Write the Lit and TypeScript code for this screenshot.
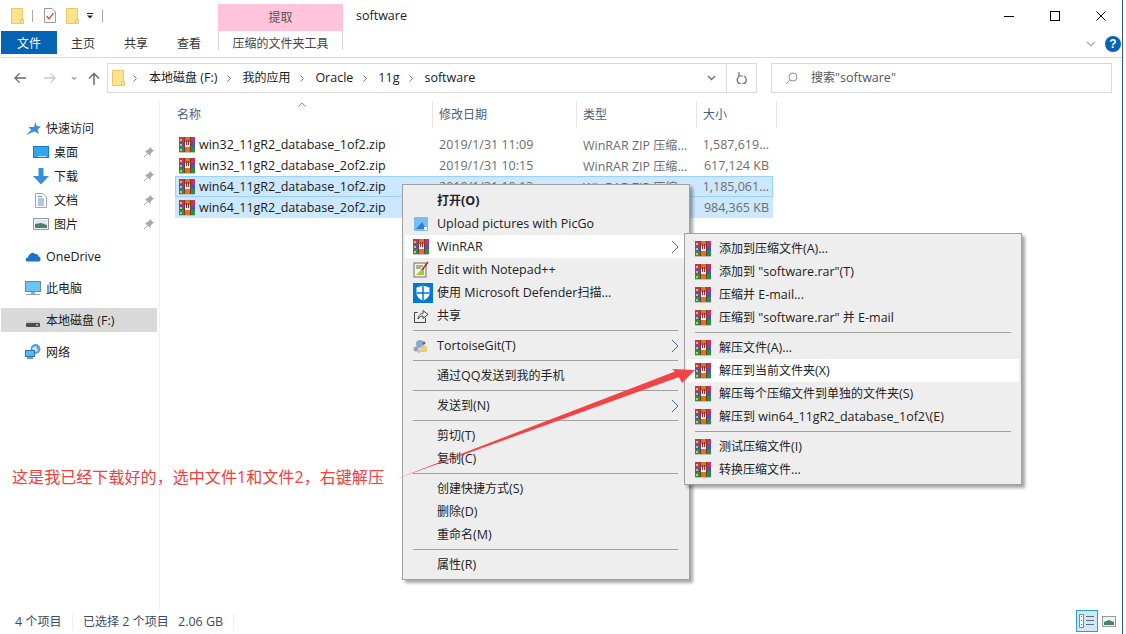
import { LitElement, html, css, svg } from "lit";
import { customElement } from "lit/decorators.js";

const CJK = /[\u3000-\u9fff\uff00-\uffef]/;

const tx = (s: string) =>
  s
    .split(/([\u3000-\u9fff\uff00-\uffef]+)/)
    .filter((p) => p)
    .map((p) => (CJK.test(p) ? p : html`<span class="lat">${p}</span>`));

const folder = () => html`<svg width="13" height="16" viewBox="0 0 13 16">
  <path d="M.5 .5H11.500V15.500H.5Z" fill="#fde38e" stroke="#e9c965"/><path d="M9.500 11.500H12.500V15.500H9.500Z" fill="#fde38e" stroke="#e9c965"/></svg>`;

const rar = () => html`<svg width="16" height="16" viewBox="0 0 16 16" shape-rendering="crispEdges">
  <rect x="0" y="0" width="16" height="5" fill="#cc2f62"/>
  <rect x="0" y="5" width="16" height="5" fill="#5252b8"/>
  <rect x="0" y="10" width="16" height="5" fill="#229244"/>
  <rect x="0" y="15" width="16" height="1" fill="#c0c0c0"/>
  <rect x="5" y="0" width="1" height="15" fill="#6a4030"/>
  <rect x="11" y="0" width="1" height="15" fill="#6a4030"/>
  <rect x="6" y="0" width="5" height="15" fill="#dc7424"/>
  <rect x="6" y="5" width="5" height="5" fill="#f6f2ea"/>
  <rect x="7" y="3" width="1" height="5" fill="#b02020"/><rect x="9" y="3" width="1" height="5" fill="#b02020"/>
  <rect x="1" y="2" width="2" height="2" fill="#e8c040"/><rect x="1" y="7" width="2" height="2" fill="#e8c040"/><rect x="1" y="12" width="2" height="2" fill="#e8c040"/>
</svg>`;

const pin = () => html`<svg class="pin" width="12" height="12" viewBox="0 0 12 12">
  <path d="M7 1L11 5L9.500 5.500L7.500 8L7.500 9.500L6.500 9.500L2.500 5.500L2.500 4.500L4 4.500L6.500 2.500Z" fill="#a8a8a8"/><path d="M4.500 7.500L1 11" stroke="#a8a8a8"/></svg>`;

const sub = () => html`<svg class="chev" width="8" height="14" viewBox="0 0 8 14"><path d="M1 1L7 7L1 13" fill="none" stroke="#4a6a9a"/></svg>`;

const navIcons: Record<string, unknown> = {
  star: html`<svg width="15" height="13" viewBox="0 0 15 13"><path d="M9.500 0L10.700 4L15 4.600L11.700 7.400L12.800 12L8.500 9.500L0 13L5.200 8L2.500 5H8Z" fill="#3f8fdc"/></svg>`,
  desktop: html`<svg width="16" height="14" viewBox="0 0 16 14"><rect x=".5" y="1.500" width="15" height="11" fill="#33a5ee" stroke="#1878c8"/><rect x="5" y="11" width="8" height="1" fill="#bfe3fb"/></svg>`,
  down: html`<svg width="16" height="17" viewBox="0 0 16 17"><path d="M5.500 0H10.500V8H16L8 16.500L0 8H5.500Z" fill="#3a8edb"/></svg>`,
  doc: html`<svg width="12" height="15" viewBox="0 0 12 15"><path d="M.5 .5H8L11.500 4V14.500H.5Z" fill="#fff" stroke="#a8a8a8"/><path d="M3 3.500H7M3 6H9M3 8H9M3 10H9M3 12H9" stroke="#5a94c8"/></svg>`,
  pic: html`<svg width="16" height="12" viewBox="0 0 16 12"><rect x=".5" y=".5" width="15" height="11" fill="#f2f2f2" stroke="#9a9a9a"/><rect x="2" y="2" width="12" height="4" fill="#dfe8f0"/><path d="M2 6L8 5L14 7V10H2Z" fill="#4c7f73"/></svg>`,
  cloud: html`<svg width="16" height="11" viewBox="0 0 16 11"><path d="M2.500 10.500C0 10.500 0 6.500 3 6.500C3.500 3 8 0 10 3C13 2.500 13.500 5 13.500 5.500C16 5.500 16.500 10.500 13.500 10.500Z" fill="#1a73c8"/></svg>`,
  pc: html`<svg width="16" height="15" viewBox="0 0 16 15"><rect x=".5" y=".5" width="15" height="10" fill="#6cc4f4" stroke="#6a8aa0"/><rect x="6" y="11" width="4" height="2" fill="#9ab"/><rect x="1" y="13" width="14" height="1" fill="#8aa0b0"/></svg>`,
  drive: html`<svg width="14" height="14" viewBox="0 0 14 14"><rect y="8" width="14" height="2" fill="#c8c8c8"/><rect y="10" width="14" height="4" rx="1" fill="#4d4d4d"/><rect x="10" y="11" width="2" height="2" fill="#5ddc5d"/></svg>`,
  net: html`<svg width="16" height="16" viewBox="0 0 16 16"><circle cx="10.500" cy="5" r="5" fill="#5aa0dc"/><path d="M7 4L11 2L13 7L9 8Z" fill="#cfe6f6"/><rect x=".5" y="6.500" width="9" height="6" fill="#58b8f0" stroke="#2c78b0"/><rect x="2" y="13" width="6" height="2" fill="#7a98b0"/></svg>`,
};

const navRows = [
  { t: "快速访问", i: "star", cls: "head" },
  { t: "桌面", i: "desktop", p: 1 },
  { t: "下载", i: "down", p: 1 },
  { t: "文档", i: "doc", p: 1 },
  { t: "图片", i: "pic", p: 1 },
  { t: "OneDrive", i: "cloud", cls: "head gap" },
  { t: "此电脑", i: "pc", cls: "head gap" },
  { t: "本地磁盘 (F:)", i: "drive", cls: "head gap sel" },
  { t: "网络", i: "net", cls: "head gap" },
];

const files = [
  ["win32_11gR2_database_1of2.zip", "2019/1/31 11:09", "WinRAR ZIP 压缩...", "1,587,619...", ""],
  ["win32_11gR2_database_2of2.zip", "2019/1/31 10:15", "WinRAR ZIP 压缩...", "617,124 KB", ""],
  ["win64_11gR2_database_1of2.zip", "2019/1/31 10:13", "WinRAR ZIP 压缩...", "1,185,061...", "sel focus"],
  ["win64_11gR2_database_2of2.zip", "2019/1/31 10:18", "WinRAR ZIP 压缩...", "984,365 KB", "sel"],
];

type M = { t?: string; i?: unknown; b?: boolean; hot?: boolean; arrow?: boolean; sep?: boolean };

const picgo = html`<svg width="16" height="16" viewBox="0 0 16 16"><rect x="1" y="1" width="14" height="14" rx="1" fill="#7cbcf0"/><path d="M3 13L9 6L13 13Z" fill="#2a7ed8"/><rect x="11" y="11" width="3" height="3" fill="#fff"/></svg>`;
const npp = html`<svg width="16" height="17" viewBox="0 0 16 17"><rect x="1" y="2" width="12" height="14" fill="#f4f4d8" stroke="#707070"/><path d="M3 14L11 6V14Z" fill="#9ccc40"/><path d="M3 5H10M3 7H8" stroke="#666"/><path d="M9 9L15 1" stroke="#a03030" stroke-width="1.500"/></svg>`;
const defender = html`<svg class="wide" width="20" height="20" viewBox="0 0 20 20"><rect width="20" height="20" fill="#0078d4"/><path d="M10 2.500L16.500 4.500V10C16.500 14 13 16.500 10 17.500C7 16.500 3.500 14 3.500 10V4.500Z" fill="#fff"/><path d="M10 2.500V17.500M3.500 10H16.500" stroke="#0078d4" stroke-width="1.500"/></svg>`;
const share = html`<svg width="16" height="16" viewBox="0 0 16 16" fill="none" stroke="#404040"><path d="M4.500 4.500H1.500V14.500H12.500V10"/><path d="M5 11C5.500 7 8 5.500 10 5.500V2.500L15 6.500L10 10.500V8C8 8 6 9 5 11Z"/></svg>`;
const tgit = html`<svg width="16" height="16" viewBox="0 0 16 16"><circle cx="7" cy="6" r="4" fill="#8aa8d0"/><circle cx="3" cy="11" r="2.500" fill="#a0a0a8"/><rect x="8" y="8" width="6" height="6" fill="#e8d070"/><circle cx="11" cy="5" r="1.500" fill="#6a6a70"/><circle cx="6" cy="13" r="2" fill="#c0c0c8"/></svg>`;

const menu1: M[] = [
  { t: "打开(O)", b: true },
  { t: "Upload pictures with PicGo", i: picgo },
  { t: "WinRAR", i: rar(), hot: true, arrow: true },
  { t: "Edit with Notepad++", i: npp },
  { t: "使用 Microsoft Defender扫描...", i: defender },
  { t: "共享", i: share },
  { sep: true },
  { t: "TortoiseGit(T)", i: tgit, arrow: true },
  { sep: true },
  { t: "通过QQ发送到我的手机" },
  { sep: true },
  { t: "发送到(N)", arrow: true },
  { sep: true },
  { t: "剪切(T)" },
  { t: "复制(C)" },
  { sep: true },
  { t: "创建快捷方式(S)" },
  { t: "删除(D)" },
  { t: "重命名(M)" },
  { sep: true },
  { t: "属性(R)" },
];

const menu2: M[] = [
  { t: "添加到压缩文件(A)...", i: rar() },
  { t: '添加到 "software.rar"(T)', i: rar() },
  { t: "压缩并 E-mail...", i: rar() },
  { t: '压缩到 "software.rar" 并 E-mail', i: rar() },
  { sep: true },
  { t: "解压文件(A)...", i: rar() },
  { t: "解压到当前文件夹(X)", i: rar(), hot: true },
  { t: "解压每个压缩文件到单独的文件夹(S)", i: rar() },
  { t: "解压到 win64_11gR2_database_1of2\\(E)", i: rar() },
  { sep: true },
  { t: "测试压缩文件(I)", i: rar() },
  { t: "转换压缩文件...", i: rar() },
];

const renderMenu = (items: M[]) =>
  items.map((m) =>
    m.sep
      ? html`<div class="msep"></div>`
      : html`<div class="mi ${m.hot ? "hot" : ""}">
          <span class="mic">${m.i ?? ""}</span>
          <span class="mt ${m.b ? "bold" : ""} ${CJK.test(m.t ?? "") ? "cjk" : ""}">${tx(m.t ?? "")}</span>
          ${m.arrow ? sub() : ""}
        </div>`
  );

@customElement("app-root")
export class AppRoot extends LitElement {
  static styles = css`
    :host {
      display: block;
      width: 1126px;
      height: 634px;
      font-family: "Open Sans", "Noto Sans CJK SC", sans-serif;
      font-size: 12px;
      color: #1a1a1a;
    }
    .lat {
      font-size: 12.5px;
    }
    .win {
      position: relative;
      width: 1126px;
      height: 634px;
      box-sizing: border-box;
      background: #fff;
      overflow: hidden;
      display: flex;
      flex-direction: column;
      border-right: 3px solid #fff;
    }
    .win::after {
      content: "";
      position: absolute;
      right: 0;
      top: 0;
      bottom: 0;
      width: 1px;
      background: #2a5a98;
    }
    svg {
      display: block;
      flex: none;
    }
    .title {
      height: 31px;
      display: flex;
      align-items: flex-end;
      flex: none;
    }
    .qat {
      width: 218px;
      height: 31px;
      display: flex;
      align-items: center;
      padding-left: 11px;
      box-sizing: border-box;
      flex: none;
    }
    .qsep {
      width: 1px;
      height: 12px;
      background: #a8a8a8;
      margin: 0 11px 0 8px;
    }
    .qdoc {
      margin-right: 10px;
    }
    .qdrop {
      margin-left: 8px;
      margin-right: 1px;
      width: 6px;
      height: 6px;
    }
    .pink {
      width: 125px;
      height: 27px;
      box-sizing: border-box;
      padding-bottom: 2px;
      background: #ffc4dc;
      display: flex;
      align-items: center;
      justify-content: center;
      color: #555;
      flex: none;
    }
    .wintitle {
      margin-left: 13px;
      height: 31px;
      line-height: 32px;
      flex: 1;
    }
    .caps {
      display: flex;
      height: 31px;
      margin-right: -1px;
    }
    .cap {
      width: 46px;
      height: 31px;
      display: flex;
      align-items: center;
      justify-content: center;
    }
    .tabs {
      height: 23px;
      display: flex;
      flex: none;
      align-items: stretch;
      padding-left: 1px;
    }
    .tab {
      display: flex;
      align-items: center;
      justify-content: center;
      color: #333;
      box-sizing: border-box;
    }
    .file {
      width: 56px;
      background: #0563b3;
      color: #fff;
    }
    .t1 {
      width: 52px;
    }
    .t2 {
      width: 54px;
    }
    .t3 {
      width: 55px;
      padding-right: 3px;
    }
    .ctx {
      width: 125px;
      color: #444;
      margin-right: auto;
      background:
        linear-gradient(#d8d8d8, #d8d8d8) left top / 1px 19px no-repeat,
        linear-gradient(#d8d8d8, #d8d8d8) right top / 1px 19px no-repeat;
    }
    .ribctl {
      display: flex;
      align-items: center;
      gap: 9px;
      padding: 3px 2px 0 0;
    }
    .help {
      width: 16px;
      height: 16px;
      border-radius: 50%;
      background: #0a62b8;
      color: #fff;
      font: bold 12px/16px "Liberation Sans", sans-serif;
      text-align: center;
    }
    .rule {
      height: 1px;
      margin: 3px 0 0 1px;
      background: #d9d9d9;
      flex: none;
    }
    .addr {
      height: 30px;
      margin-top: 5px;
      display: flex;
      align-items: center;
      flex: none;
    }
    .navbtns {
      width: 107px;
      display: flex;
      align-items: center;
      flex: none;
      padding-left: 14px;
      box-sizing: border-box;
    }
    .back {
      margin-right: 18px;
    }
    .fwd {
      margin-right: 15px;
    }
    .dd {
      margin-right: 11px;
    }
    .pathbox {
      width: 650px;
      height: 30px;
      box-sizing: border-box;
      border: 1px solid #d9d9d9;
      display: flex;
      align-items: center;
      padding-left: 4px;
      flex: none;
    }
    .crumb {
      white-space: nowrap;
      padding-bottom: 2px;
    }
    .crsep {
      margin: 0 11px 0 10px;
    }
    .crfirst {
      margin: 0 12px 0 8px;
    }
    .pathend {
      margin-left: auto;
      display: flex;
      align-items: center;
      height: 100%;
    }
    .pathdd {
      width: 30px;
      display: flex;
      justify-content: center;
      align-items: center;
      height: 100%;
      border-right: 1px solid #d9d9d9;
      box-sizing: border-box;
    }
    .refresh {
      width: 29px;
      display: flex;
      justify-content: center;
    }
    .search {
      width: 341px;
      height: 30px;
      box-sizing: border-box;
      margin-left: 14px;
      border: 1px solid #d9d9d9;
      display: flex;
      align-items: center;
      padding-left: 13px;
      gap: 13px;
      color: #555;
      flex: none;
    }
    .search span.q {
      padding-bottom: 2px;
    }
    .body {
      flex: 1;
      display: flex;
      min-height: 0;
      margin-top: 8px;
    }
    .nav {
      width: 160px;
      box-sizing: border-box;
      border-right: 1px solid #f0f0f0;
      padding-top: 15px;
      flex: none;
    }
    .nr {
      height: 24px;
      display: flex;
      align-items: center;
      margin: 0 2px 0 1px;
      position: relative;
      white-space: nowrap;
    }
    .nr .nic {
      width: 16px;
      display: flex;
      justify-content: center;
      margin-left: 32px;
      margin-right: 5px;
    }
    .nr.head .nic {
      margin-left: 24px;
    }
    .nr.gap {
      margin-top: 8px;
    }
    .nr.sel {
      background: #d9d9d9;
    }
    .pin {
      position: absolute;
      left: 142px;
      top: 6px;
    }
    .list {
      flex: 1;
      min-width: 0;
      padding-left: 15px;
    }
    .hdr {
      display: flex;
      height: 27px;
      color: #4c607a;
      position: relative;
    }
    .hc {
      box-sizing: border-box;
      padding: 0 0 2px 6px;
      border-right: 1px solid #e5e5e5;
      display: flex;
      align-items: center;
      flex: none;
    }
    .c1 {
      width: 258px;
      padding-left: 2px;
    }
    .c2 {
      width: 144px;
    }
    .c3 {
      width: 120px;
    }
    .c4 {
      width: 80px;
    }
    .sort {
      position: absolute;
      left: 123px;
      top: 1px;
    }
    .rows {
      margin-top: 6px;
      width: 598px;
    }
    .row {
      display: flex;
      height: 21px;
      align-items: center;
      box-sizing: border-box;
      color: #6d6d6d;
      white-space: nowrap;
    }
    .row.sel {
      background: #cce8ff;
    }
    .row.focus {
      outline: 1px solid #99d1ff;
      outline-offset: -1px;
    }
    .fname {
      width: 257px;
      flex: none;
      display: flex;
      align-items: center;
      gap: 4px;
      padding-left: 4px;
      box-sizing: border-box;
      color: #1a1a1a;
    }
    .fdate {
      width: 144px;
      flex: none;
      padding-left: 7px;
      box-sizing: border-box;
    }
    .ftype {
      width: 120px;
      flex: none;
      padding-left: 7px;
      box-sizing: border-box;
    }
    .fsize {
      flex: 1;
      text-align: right;
      padding-right: 4px;
    }
    .status {
      height: 24px;
      box-sizing: border-box;
      padding: 0 0 2px 15px;
      display: flex;
      align-items: center;
      color: #3a4a60;
      flex: none;
      position: relative;
    }
    .st1 {
      width: 57px;
      flex: none;
    }
    .st2 {
      width: 95px;
      padding-left: 10px;
      flex: none;
      border-left: 1px solid #f0f0f0;
    }
    .st3 {
      width: 55px;
      flex: none;
      border-right: 1px solid #f0f0f0;
    }
    .views {
      margin-left: auto;
      display: flex;
      align-items: center;
      gap: 4px;
      padding-right: 7px;
    }
    .vbtn {
      width: 22px;
      height: 22px;
      box-sizing: border-box;
      border: 1px solid #26a0da;
      background: #cce8ff;
      display: flex;
      align-items: center;
      justify-content: center;
    }
    .menu {
      position: absolute;
      box-sizing: border-box;
      background: #eeeeee;
      border: 1px solid #a0a0a0;
      box-shadow: 3px 3px 3px rgba(0, 0, 0, 0.35);
      padding: 3px 2px;
      white-space: nowrap;
      color: #222;
    }
    .m1 {
      left: 402px;
      top: 184px;
      width: 288px;
      height: 396px;
      padding-top: 4px;
    }
    .m2 {
      left: 684px;
      top: 233px;
      width: 338px;
      height: 252px;
    }
    .m1 .mt.cjk,
    .m2 .mt {
      padding-bottom: 2px;
    }
    .mi {
      height: 23px;
      display: flex;
      align-items: center;
      position: relative;
    }
    .mi.hot {
      background: #fff;
    }
    .mic {
      width: 32px;
      display: flex;
      justify-content: center;
      flex: none;
    }
    .wide {
      margin-left: 4px;
    }
    .mt.bold {
      font-weight: 700;
    }
    .chev {
      position: absolute;
      right: 8px;
      top: 5px;
    }
    .msep {
      height: 1px;
      background: #a0a0a0;
      margin: 3px 9px 3px 8px;
    }
    .m2 .msep {
      margin: 3px 8px 3px 8px;
    }
    .note {
      position: absolute;
      left: 12px;
      top: 466px;
      color: #f04040;
      font-size: 16px;
      line-height: 22px;
      letter-spacing: 0.07px;
      white-space: nowrap;
    }
    .arrow {
      position: absolute;
      left: 390px;
      top: 360px;
    }
  `;

  render() {
    return html`<div class="win">
      <div class="title">
        <div class="qat">
          ${folder()}
          <span class="qsep"></span>
          <svg class="qdoc" width="12" height="15" viewBox="0 0 12 15"><path d="M.5 .5H8L11.500 4V14.500H.5Z" fill="#fff" stroke="#999"/><path d="M2.500 8L5 11L9.500 5" fill="none" stroke="#e0502a" stroke-width="1.300"/></svg>
          ${folder()}
          <svg class="qdrop" viewBox="0 0 6 6"><rect width="6" height="1" fill="#222"/><path d="M0 2.500H6L3 5.500Z" fill="#222"/></svg>
          <span class="qsep"></span>
        </div>
        <div class="pink">提取</div>
        <div class="wintitle">${tx("software")}</div>
        <div class="caps">
          <div class="cap"><svg width="10" height="10" viewBox="0 0 10 10"><path d="M0 5.500H10" stroke="#000"/></svg></div>
          <div class="cap"><svg width="10" height="10" viewBox="0 0 10 10"><rect x=".5" y=".5" width="9" height="9" fill="none" stroke="#000"/></svg></div>
          <div class="cap"><svg width="10" height="10" viewBox="0 0 10 10"><path d="M.5 .5L9.500 9.500M9.500 .5L.5 9.500" stroke="#000"/></svg></div>
        </div>
      </div>
      <div class="tabs">
        <div class="tab file">文件</div>
        <div class="tab t1">主页</div>
        <div class="tab t2">共享</div>
        <div class="tab t3">查看</div>
        <div class="tab ctx">压缩的文件夹工具</div>
        <div class="ribctl">
          <svg width="10" height="6" viewBox="0 0 10 6"><path d="M1 1L5 5L9 1" fill="none" stroke="#a8a8a8" stroke-width="1.200"/></svg>
          <div class="help">?</div>
        </div>
      </div>
      <div class="rule"></div>
      <div class="addr">
        <div class="navbtns">
          <svg class="back" width="12" height="12" viewBox="0 0 13 12"><path d="M6 1L1 6L6 11M1 6H13" fill="none" stroke="#6a6a6a" stroke-width="1.500"/></svg>
          <svg class="fwd" width="12" height="12" viewBox="0 0 13 12"><path d="M7 1L12 6L7 11M12 6H0" fill="none" stroke="#c8c8c8" stroke-width="1.500"/></svg>
          <svg class="dd" width="6" height="5" viewBox="0 0 7 5"><path d="M1 1L3.500 3.500L6 1" fill="none" stroke="#8a8a8a" stroke-width="1.200"/></svg>
          <svg width="12" height="13" viewBox="0 0 12 13"><path d="M1 6.500L6 1.500L11 6.500M6 1.500V13" fill="none" stroke="#6a6a6a" stroke-width="1.500"/></svg>
        </div>
        <div class="pathbox">
          ${folder()}
          <svg class="crfirst" width="4" height="7" viewBox="0 0 4 7"><path d="M.5 .5L3.500 3.500L.5 6.500" fill="none" stroke="#777"/></svg>
          ${["本地磁盘 (F:)", "我的应用", "Oracle", "11g", "software"].map(
            (c, i, a) => html`<span class="crumb">${tx(c)}</span>${i < a.length - 1
                ? html`<svg class="crsep" width="4" height="7" viewBox="0 0 4 7"><path d="M.5 .5L3.500 3.500L.5 6.500" fill="none" stroke="#777"/></svg>`
                : ""}`
          )}
          <div class="pathend">
            <div class="pathdd"><svg width="9" height="6" viewBox="0 0 9 6"><path d="M1 1L4.500 4.500L8 1" fill="none" stroke="#707070" stroke-width="1.300"/></svg></div>
            <div class="refresh"><svg width="11" height="12" viewBox="0 0 11 12"><path d="M7.500 3A4.500 4.500 0 1 1 3 3" fill="none" stroke="#707070" stroke-width="1.300" transform="translate(.500 1)"/><path d="M3 0V4H7" fill="none" stroke="#707070" stroke-width="1.200"/></svg></div>
          </div>
        </div>
        <div class="search">
          <svg width="13" height="13" viewBox="0 0 13 13"><circle cx="8" cy="5" r="4" fill="none" stroke="#909090"/><path d="M5 8L1 12" stroke="#c09878"/></svg>
          <span class="q">${tx('搜索"software"')}</span>
        </div>
      </div>
      <div class="body">
        <div class="nav">
          ${navRows.map(
            (n) => html`<div class="nr ${n.cls ?? ""}">
              <span class="nic">${navIcons[n.i]}</span><span>${tx(n.t)}</span>${n.p ? pin() : ""}
            </div>`
          )}
        </div>
        <div class="list">
          <div class="hdr">
            <svg class="sort" width="8" height="5" viewBox="0 0 8 5"><path d="M.5 4.500L4 1L7.500 4.500" fill="none" stroke="#8a8a8a"/></svg>
            <div class="hc c1">名称</div>
            <div class="hc c2">修改日期</div>
            <div class="hc c3">类型</div>
            <div class="hc c4">大小</div>
          </div>
          <div class="rows">
            ${files.map(
              (f) => html`<div class="row ${f[4]}">
                <div class="fname">${rar()}<span>${tx(f[0])}</span></div>
                <div class="fdate">${tx(f[1])}</div>
                <div class="ftype">${tx(f[2])}</div>
                <div class="fsize">${tx(f[3])}</div>
              </div>`
            )}
          </div>
        </div>
      </div>
      <div class="status">
        <div class="st1">${tx("4 个项目")}</div>
        <div class="st2">${tx("已选择 2 个项目")}</div>
        <div class="st3">${tx("2.06 GB")}</div>
        <div class="views">
          <div class="vbtn">
            <svg width="16" height="14" viewBox="0 0 16 14" shape-rendering="crispEdges"><rect x=".5" y=".5" width="4" height="13" fill="#fff" stroke="#8a8a8a"/><rect x="2" y="2" width="1" height="1" fill="#b05050"/><rect x="2" y="6" width="1" height="1" fill="#5080b0"/><rect x="2" y="10" width="1" height="1" fill="#b05050"/><path d="M7 2.500H15M7 6.500H15M7 10.500H15" stroke="#6a6a6a"/></svg>
          </div>
          <svg width="14" height="11" viewBox="0 0 14 11"><rect x=".5" y=".5" width="13" height="10" fill="#eef2f6" stroke="#9a9a9a"/><path d="M2 6L7 4L12 6V9H2Z" fill="#4c7f73"/></svg>
        </div>
      </div>

      <div class="menu m1">${renderMenu(menu1)}</div>
      <div class="menu m2">${renderMenu(menu2)}</div>
      <div class="note">这是我已经下载好的，选中文件1和文件2，右键解压</div>
      <svg class="arrow" width="310" height="125" viewBox="390 360 310 125">
        ${svg`<path d="M396 479L675 371.500L672 369L695 370L682 383L679 377Z" fill="#f24444"/>`}
      </svg>
    </div>`;
  }
}
